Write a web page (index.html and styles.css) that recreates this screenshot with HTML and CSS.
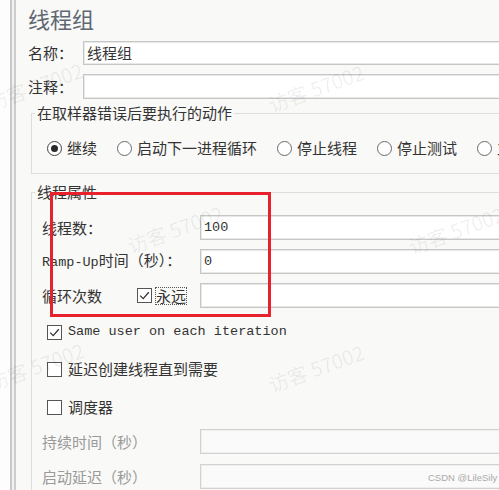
FILE: index.html
```html
<!DOCTYPE html>
<html lang="zh">
<head>
<meta charset="utf-8">
<link rel="stylesheet" href="styles.css">
</head>
<body>
<div class="page">
  <div class="gutter"></div>
  <div class="rail"></div>
  <main class="panel">
    <h1 class="title">线程组</h1>
    <div class="field f1"><span class="flabel">名称：</span><div class="input">线程组</div></div>
    <div class="field f2"><span class="flabel">注释：</span><div class="input"></div></div>

    <fieldset class="group g1">
      <legend>在取样器错误后要执行的动作</legend>
      <div class="radios">
        <span class="opt"><span class="radio on"></span>继续</span>
        <span class="opt"><span class="radio"></span>启动下一进程循环</span>
        <span class="opt"><span class="radio"></span>停止线程</span>
        <span class="opt"><span class="radio"></span>停止测试</span>
        <span class="opt"><span class="radio"></span>立即停止测试</span>
      </div>
    </fieldset>

    <fieldset class="group g2">
      <legend>线程属性</legend>
      <div class="prow r1"><span class="plabel">线程数：</span><div class="input mono">100</div></div>
      <div class="prow r2"><span class="plabel"><span class="mono">Ramp-Up</span>时间（秒）：</span><div class="input mono">0</div></div>
      <div class="prow r3">
        <span class="plabel loop"><span class="looptxt">循环次数</span><span class="check on"><svg viewBox="0 0 15 15" width="15" height="15"><path d="M3.2 7.6 L6.2 10.6 L11.8 4.2" fill="none" stroke="#333" stroke-width="1.3"/></svg></span><span class="focus">永远</span></span>
        <div class="input"></div>
      </div>
      <div class="crow c1"><span class="check on"><svg viewBox="0 0 15 15" width="15" height="15"><path d="M3.2 7.6 L6.2 10.6 L11.8 4.2" fill="none" stroke="#333" stroke-width="1.3"/></svg></span><span class="mono ctext">Same user on each iteration</span></div>
      <div class="crow c2"><span class="check"></span><span class="ctext">延迟创建线程直到需要</span></div>
      <div class="crow c3"><span class="check"></span><span class="ctext">调度器</span></div>
      <div class="prow r4 off"><span class="plabel">持续时间（秒）</span><div class="input"></div></div>
      <div class="prow r5 off"><span class="plabel">启动延迟（秒）</span><div class="input"></div></div>
    </fieldset>
  </main>

  <div class="redbox"></div>
  <span class="wm w1">访客 57002</span>
  <span class="wm w2">访客 57002</span>
  <span class="wm w3">访客 57002</span>
  <span class="wm w4">访客 57002</span>
  <span class="wm w5">访客 57002</span>
  <span class="wm w6">访客 57002</span>
  <span class="csdn">CSDN @LileSily</span>
</div>
</body>
</html>
```

FILE: styles.css
```css
html, body {
  margin: 0;
  padding: 0;
  background: #fcfcfc;
  overflow: hidden;
}
.page {
  position: relative;
  display: flex;
  width: 560px;
  height: 490px;
  font-family: "Noto Sans CJK SC", "Noto Sans", sans-serif;
  font-size: 15px;
  color: #333;
}
.gutter {
  width: 10px;
  flex: none;
  background: #fdfdfd;
}
.rail {
  width: 2px;
  flex: none;
  border-left: 2px solid #c9c9c9;
  border-right: 2px solid #cdcdcd;
  background: #f1f1f1;
}
.panel {
  flex: 1;
  background: #f9f9f7;
  padding: 0 0 0 12px;
}
.title {
  margin: 5px 0 0;
  font-size: 22px;
  line-height: 26px;
  font-weight: normal;
  color: #5e6873;
}
.field {
  display: flex;
  align-items: center;
}
.f1 { margin-top: 10px; height: 24px; }
.f2 { margin-top: 9px; height: 25px; }
.flabel {
  width: 55px;
  flex: none;
  line-height: 20px;
}
.input {
  flex: 1;
  align-self: stretch;
  box-sizing: border-box;
  background: #fff;
  border: 1px solid #c6c6c6;
  box-shadow: inset 0 0 0 1px #e8e8e8;
  padding: 0 3px;
  display: flex;
  align-items: center;
  line-height: 20px;
}
.mono {
  font-family: "Liberation Mono", "Noto Sans CJK SC", monospace;
  font-size: 13.5px;
}
.group {
  margin: 0 0 0 3px;
  border: 1px solid #dedede;
  min-width: 0;
}
.group legend {
  padding: 0 2px;
  line-height: 20px;
  font-size: 15px;
}
.g1 {
  margin-top: 4px;
  padding: 15px 0 15px 15px;
}
.g1 legend { margin-left: -12px; }
.g2 {
  margin-top: 8px;
  padding: 13px 0 20px 10px;
}
.g2 legend { margin-left: -7px; }
.radios {
  display: flex;
  gap: 20px;
  height: 20px;
  align-items: center;
  white-space: nowrap;
}
.opt {
  display: flex;
  align-items: center;
  gap: 5px;
  line-height: 20px;
}
.radio {
  width: 15px;
  height: 15px;
  box-sizing: border-box;
  border: 1px solid #6a6a6a;
  border-radius: 50%;
  background: #fff;
  display: flex;
  align-items: center;
  justify-content: center;
}
.radio.on { border-color: #444; }
.radio.on::after {
  content: "";
  width: 7px;
  height: 7px;
  border-radius: 50%;
  background: #2a2a2a;
}
.prow {
  display: flex;
  align-items: center;
  height: 25px;
}
.r1 { margin-top: 0; }
.r2 { margin-top: 9px; }
.r3 { margin-top: 9px; }
.r4 { margin-top: 12px; }
.r5 { margin-top: 10px; }
.plabel {
  width: 158px;
  flex: none;
  line-height: 20px;
  white-space: nowrap;
}
.plabel .mono { font-size: 13.5px; }
.loop {
  display: flex;
  align-items: center;
}
.looptxt { width: 95px; flex: none; }
.loop .focus {
  margin-left: 3px;
  border: 1px dotted #555;
  line-height: 16px;
  padding: 0;
}
.check {
  width: 15px;
  height: 15px;
  box-sizing: border-box;
  border: 1px solid #555;
  background: #fff;
  flex: none;
  display: block;
}
.check svg { display: block; margin: -1px 0 0 -1px; }
.crow {
  display: flex;
  align-items: center;
  height: 20px;
  padding-left: 5px;
  gap: 6px;
}
.c1 { margin-top: 14px; }
.c2 { margin-top: 17px; }
.c3 { margin-top: 18px; }
.ctext { line-height: 20px; white-space: nowrap; }
.off .plabel { color: #9a9a9a; }
.off .input {
  background: #fafafa;
  border-color: #d2d2d2;
  box-shadow: inset 0 0 0 1px #eeeeee;
}
.redbox {
  position: absolute;
  left: 50px;
  top: 192px;
  width: 221px;
  height: 125px;
  box-sizing: border-box;
  border: 3px solid #e8212c;
}
.wm {
  position: absolute;
  transform: translate(-50%, -50%) rotate(-20deg);
  font-size: 20px;
  color: rgba(0, 0, 0, 0.065);
  white-space: nowrap;
  pointer-events: none;
}
.w1 { left: 35px; top: 86px; }
.w2 { left: 316px; top: 88px; }
.w3 { left: 175px; top: 229px; }
.w4 { left: 456px; top: 230px; }
.w5 { left: 36px; top: 366px; }
.w6 { left: 316px; top: 368px; }
.csdn {
  position: absolute;
  left: 428px;
  top: 471px;
  font-family: "Liberation Sans", Arial, sans-serif;
  font-size: 9.5px;
  line-height: 14px;
  color: #a9a9a9;
  white-space: nowrap;
}
```
